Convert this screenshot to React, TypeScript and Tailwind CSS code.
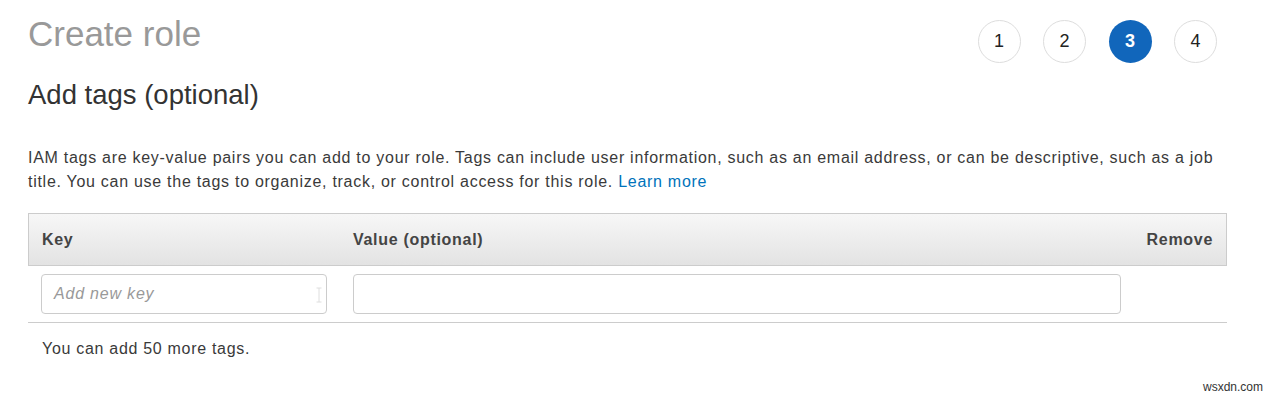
import React from "react";

export default function App() {
  const steps = [1, 2, 3, 4];
  return (
    <div className="relative w-[1277px] h-[397px] bg-white overflow-hidden font-['Liberation_Sans',Arial,sans-serif] text-[#333]">
      <div className="pl-[28px] w-[1227px]">
        <div className="flex justify-between items-start">
          <h1 className="pt-[14px] text-[35px] leading-[40px] text-[#999] font-normal">Create role</h1>
          <div className="flex gap-[22.5px] pt-[20px] mr-[10px]">
            {steps.map((s) => (
              <div
                key={s}
                className={
                  s === 3
                    ? "w-[43px] h-[43px] rounded-full bg-[#1166bb] text-white font-bold flex items-center justify-center text-[18px]"
                    : "w-[43px] h-[43px] rounded-full border border-[#dddddd] text-[#222] flex items-center justify-center text-[18px]"
                }
              >
                {s}
              </div>
            ))}
          </div>
        </div>
        <h2 className="mt-[16px] text-[27.5px] leading-[32px] text-[#333] font-normal">Add tags (optional)</h2>
        <p className="mt-[35px] text-[16px] leading-[24px] tracking-[0.72px] text-[#3a3a3a]">
          IAM tags are key-value pairs you can add to your role. Tags can include user information, such as an email address, or can be descriptive, such as a job title. You can use the tags to organize, track, or control access for this role.{" "}
          <span className="text-[#0073bb]">Learn more</span>
        </p>
        <div className="mt-[19px] w-[1199px]">
          <div className="h-[53px] border border-[#cccccc] bg-linear-to-b from-[#f7f7f7] to-[#e3e3e3] grid grid-cols-[311px_794px_1fr] items-center text-[16px] tracking-[0.7px] font-bold text-[#444]">
            <div className="pl-[13px]">Key</div>
            <div className="pl-[13px]">Value (optional)</div>
            <div className="text-right pr-[13px]">Remove</div>
          </div>
          <div className="grid grid-cols-[312px_794px_1fr] border-b border-[#cccccc] py-[8px]">
            <div className="px-[13px]">
              <div className="relative h-[40px] border border-[#cccccc] rounded-[4px] flex items-center pl-[12px]">
                <span className="italic text-[#999] text-[16px] tracking-[0.8px]">Add new key</span>
                <svg className="absolute right-[4px] top-[12px]" width="6" height="16" viewBox="0 0 6 16">
                  <path d="M0.5 1 H5.5 M3 1 V15 M0.5 15 H5.5" stroke="#dedede" strokeWidth="1" fill="none" />
                </svg>
              </div>
            </div>
            <div className="px-[13px]">
              <div className="h-[40px] border border-[#cccccc] rounded-[4px]" />
            </div>
            <div />
          </div>
          <p className="mt-[14px] pl-[14px] text-[16px] leading-[24px] tracking-[0.7px] text-[#3a3a3a]">You can add 50 more tags.</p>
        </div>
      </div>
      <div className="absolute left-[1203px] top-[380px] text-[12px] leading-[14px] text-[#333]">wsxdn.com</div>
    </div>
  );
}
